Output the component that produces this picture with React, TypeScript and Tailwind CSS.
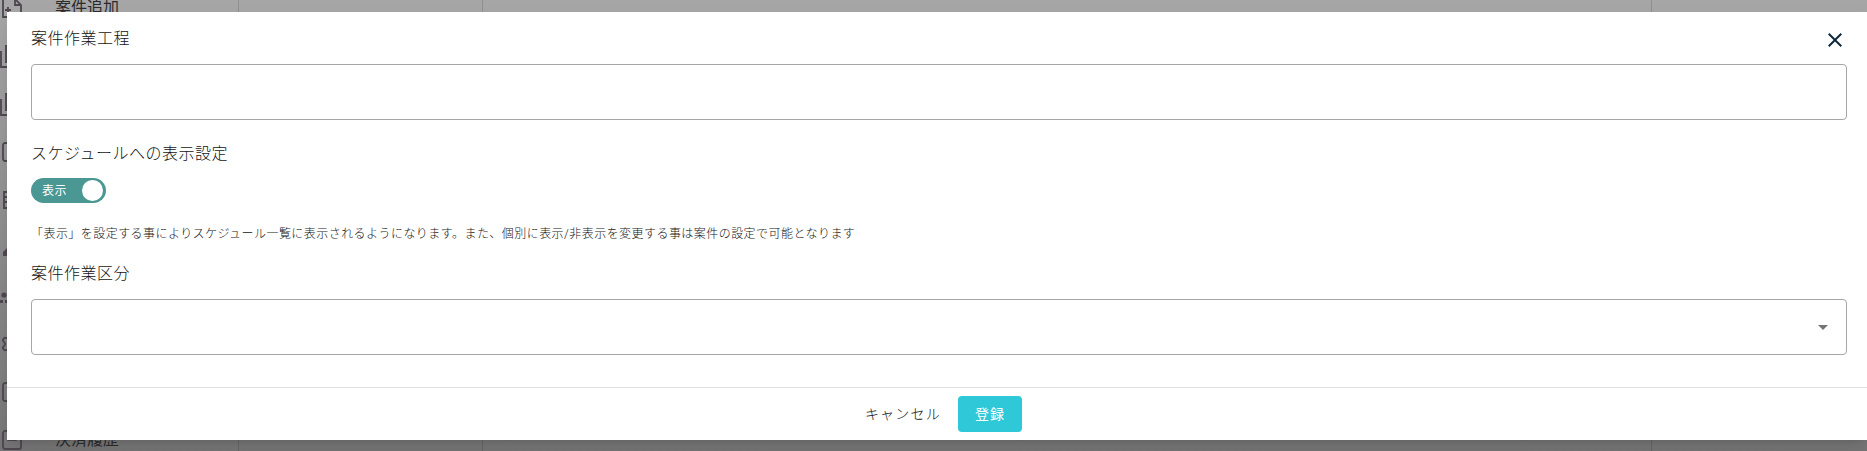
import { Settings, Square, SquareMinus } from "lucide-react";

// 背面のサイドバーのアイコン（左端の数pxしか見えない）
function DocPlus() {
  return (
    <svg width="24" height="24" viewBox="0 0 24 24" fill="none" stroke="currentColor" strokeWidth="1.8">
      <path d="M3 3h12l6 6v12H3z" />
      <path d="M15 3v6h6M8 11v6M5 14h6" />
    </svg>
  );
}

function Stack() {
  return (
    <svg width="24" height="24" viewBox="0 0 24 24" fill="none" stroke="currentColor" strokeWidth="1.8">
      <path d="M1 7v16h16M6 2h15v16H6z" />
    </svg>
  );
}

function Dashes() {
  return (
    <svg width="24" height="24" viewBox="0 0 24 24" fill="none" stroke="currentColor" strokeWidth="1.8">
      <path d="M4 4h16v16H4zM4 9h16M4 14h16" />
    </svg>
  );
}

function Blob() {
  return (
    <svg width="24" height="24" viewBox="0 0 24 24" fill="currentColor">
      <path d="M3 20v-4l5-5h8l2 9z" />
    </svg>
  );
}

function People() {
  return (
    <svg width="24" height="24" viewBox="0 0 24 24" fill="currentColor">
      <circle cx="4" cy="11" r="2.6" />
      <path d="M0 19h3v-3H0zM5 19h3v-3H5z" />
    </svg>
  );
}

const sideIcons = [
  <DocPlus />,
  <Stack />,
  <Stack />,
  <Square size={24} strokeWidth={1.8} />,
  <Dashes />,
  <Blob />,
  <People />,
  <Settings size={24} strokeWidth={1.8} />,
  <Square size={24} strokeWidth={1.8} />,
  <SquareMinus size={24} strokeWidth={1.8} />,
];

function Label({ text }: { text: string }) {
  return <div className="h-6 text-base font-light leading-6 tracking-[0.5px] text-[#141414]">{text}</div>;
}

export default function App() {
  return (
    <div className="relative h-[451px] w-full overflow-hidden bg-gradient-to-b from-[#a6a6a6] to-[#757575] font-['Roboto','Noto_Sans_CJK_JP',sans-serif]">
      {/* 背面のページ（モーダルの外に少しだけ見える） */}
      <div className="flex h-full">
        <div className="-mt-4 flex w-[239px] shrink-0 flex-col border-r border-[#00000022]">
          {sideIcons.map((icon, i) => (
            <div key={i} className="flex h-12 shrink-0 items-center text-[#4f4650]">
              {icon}
              {i === 0 && <span className="ml-[31px] text-base text-[#2b2b2b]">案件追加</span>}
              {i === 9 && <span className="ml-[31px] text-base text-[#2b2b2b]">決済履歴</span>}
            </div>
          ))}
        </div>
        <div className="w-[244px] shrink-0 border-r border-[#00000022]" />
        <div className="flex-1 border-r border-[#00000022]" />
        <div className="w-[215px] shrink-0" />
      </div>

      {/* モーダル */}
      <div className="absolute top-3 right-0 left-[7px] flex h-[428px] flex-col bg-white shadow-lg">
        <div className="flex flex-1 flex-col pt-[15px] pr-5 pl-6">
          <Label text="案件作業工程" />
          <div className="mt-[13px] h-14 shrink-0 rounded border border-[#a6a6a6]" />

          <div className="mt-[22px]">
            <Label text="スケジュールへの表示設定" />
          </div>
          <div className="mt-3 flex h-[25px] w-[75px] items-center justify-between rounded-full bg-[#4a9794] pr-[3px] pl-[11px]">
            <span className="text-xs tracking-[0.4px] text-white">表示</span>
            <span className="h-[21px] w-[21px] rounded-full bg-white" />
          </div>
          <div className="mt-[22px] h-[18px] text-xs font-light leading-[18px] tracking-[0.45px] text-[#141414] [text-spacing-trim:space-all]">
            「表示」を設定する事によりスケジュール一覧に表示されるようになります。また、個別に表示/非表示を変更する事は案件の設定で可能となります
          </div>

          <div className="mt-[19px]">
            <Label text="案件作業区分" />
          </div>
          <div className="mt-[13px] flex h-14 shrink-0 items-center justify-end rounded border border-[#a6a6a6] pr-[18px]">
            <span className="h-0 w-0 border-x-[5px] border-t-[5px] border-x-transparent border-t-[#757575]" />
          </div>
        </div>

        <div className="flex h-[53px] shrink-0 items-center justify-center gap-[17px] border-t border-[#e0e0e0] pl-[13px]">
          <button className="text-sm font-light tracking-[1.25px] text-[#141414]">キャンセル</button>
          <button className="h-9 w-16 rounded bg-[#2ec8d8] text-sm tracking-[1.25px] text-white">登録</button>
        </div>

        <button className="absolute top-4 right-5 text-[#10293a]">
          <svg width="24" height="24" viewBox="0 0 24 24" fill="currentColor">
            <path d="M19,6.41L17.59,5L12,10.59L6.41,5L5,6.41L10.59,12L5,17.59L6.41,19L12,13.41L17.59,19L19,17.59L13.41,12L19,6.41Z" />
          </svg>
        </button>
      </div>
    </div>
  );
}
